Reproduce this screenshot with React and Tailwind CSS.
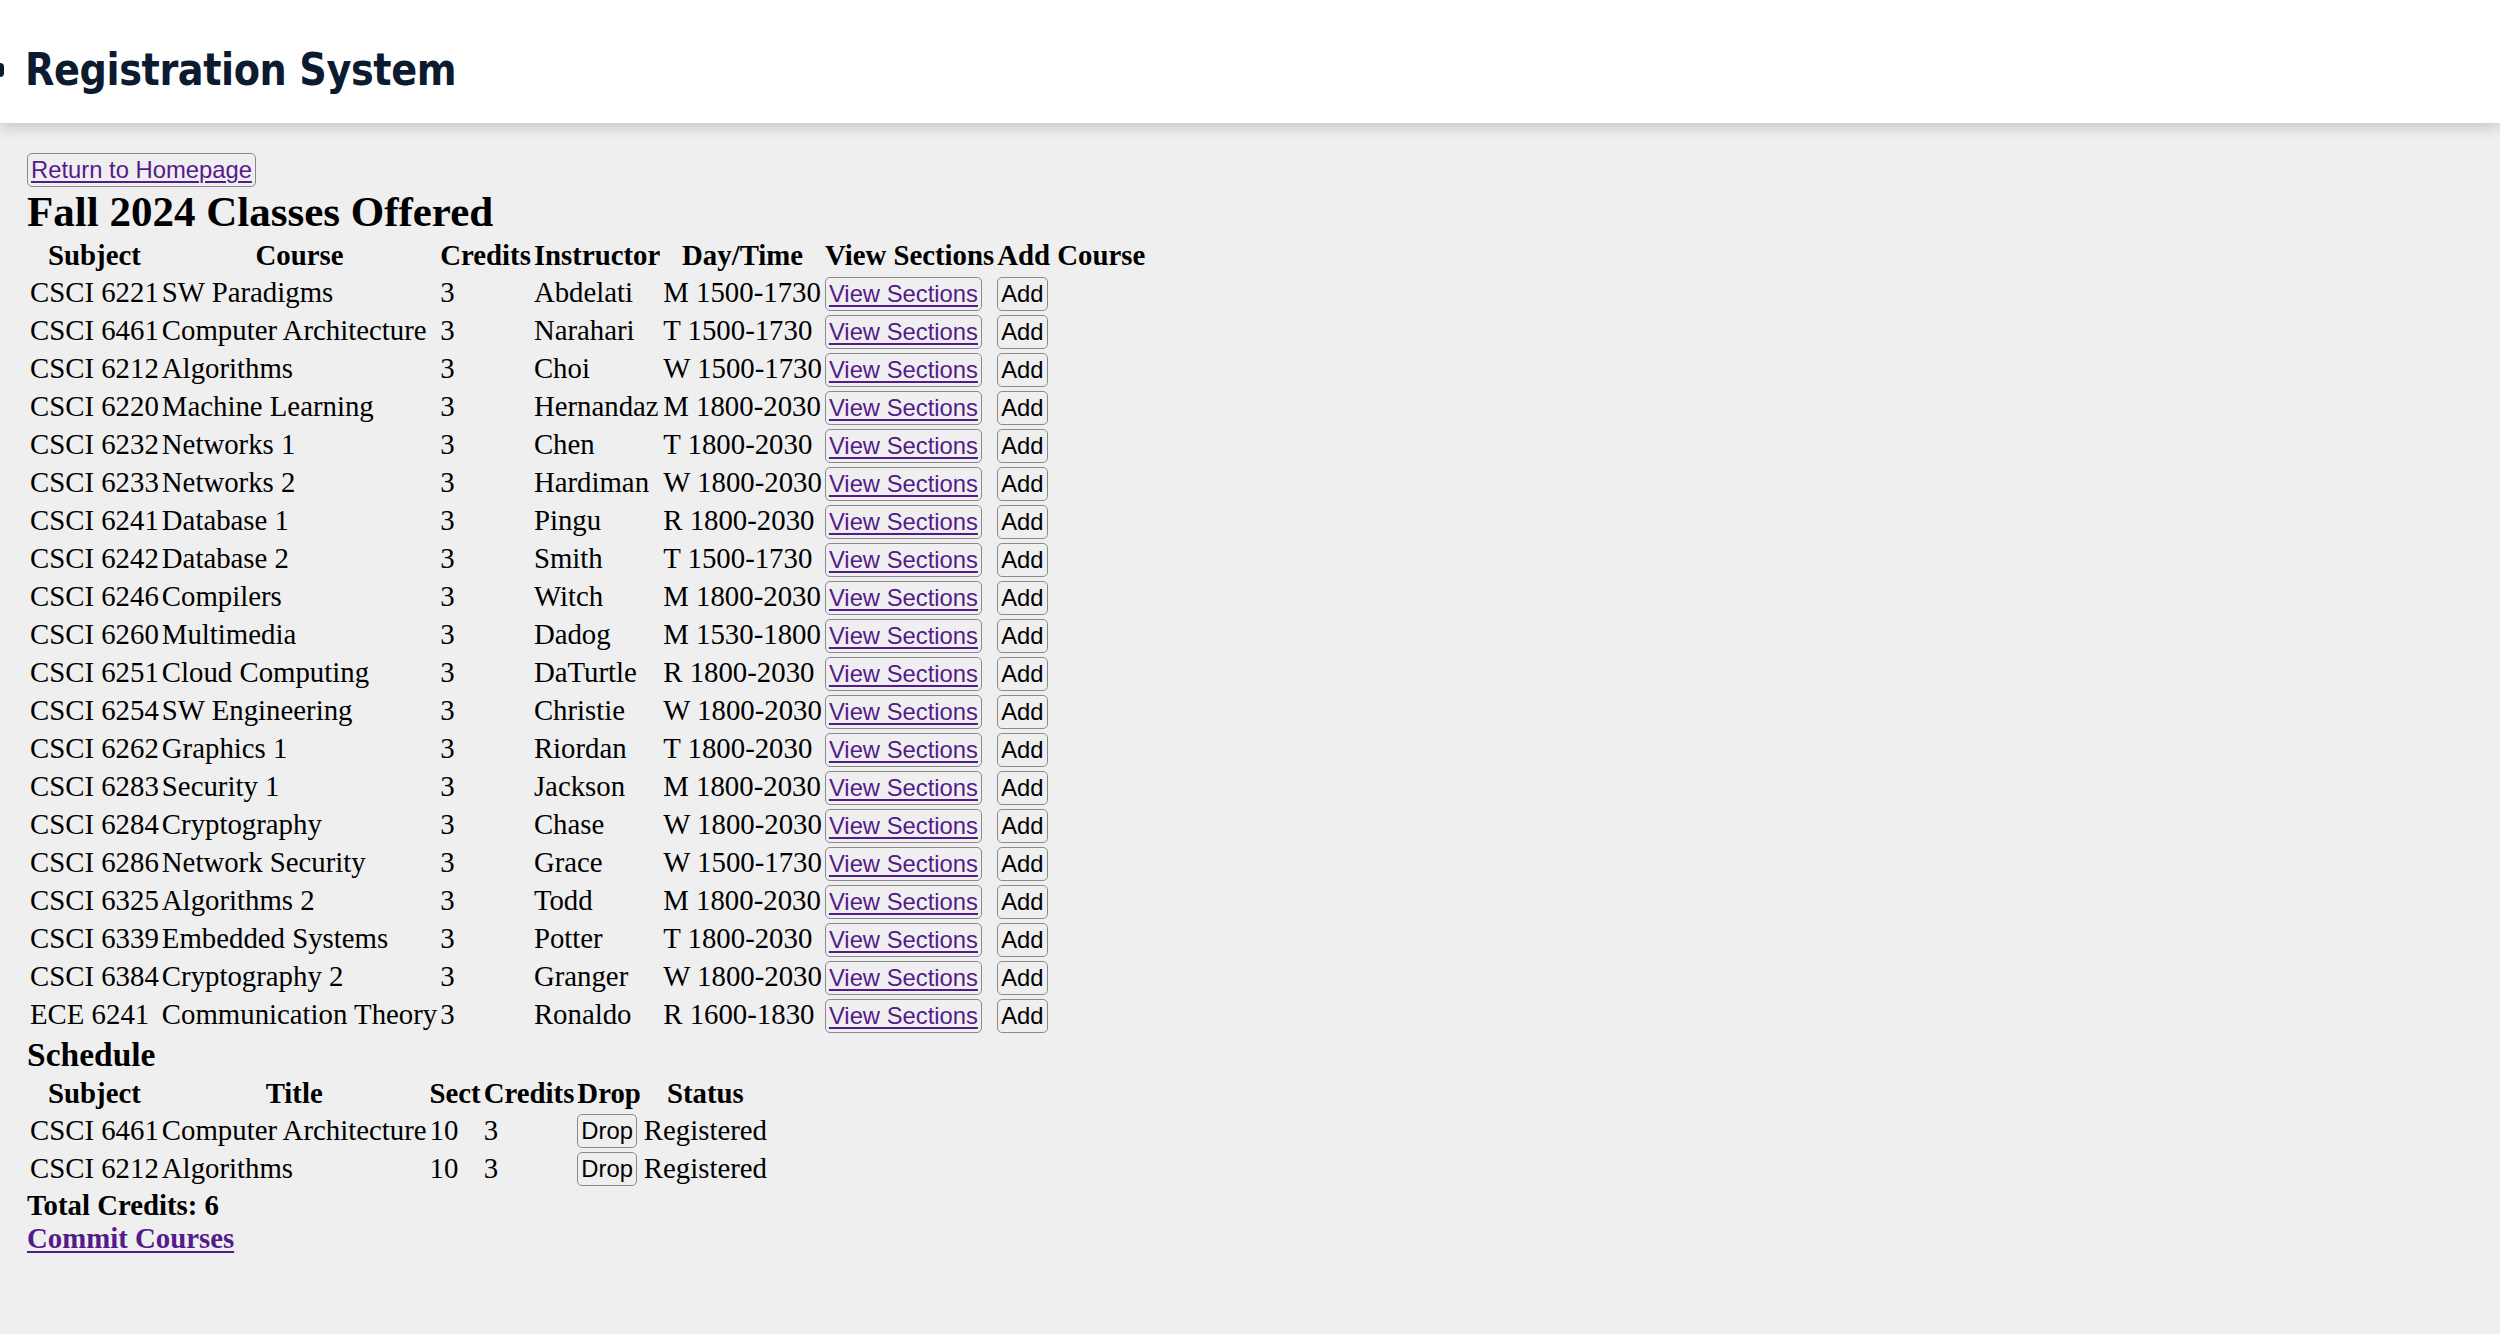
import React from 'react'

const courses = [
  ['CSCI 6221', 'SW Paradigms', '3', 'Abdelati', 'M 1500-1730'],
  ['CSCI 6461', 'Computer Architecture', '3', 'Narahari', 'T 1500-1730'],
  ['CSCI 6212', 'Algorithms', '3', 'Choi', 'W 1500-1730'],
  ['CSCI 6220', 'Machine Learning', '3', 'Hernandaz', 'M 1800-2030'],
  ['CSCI 6232', 'Networks 1', '3', 'Chen', 'T 1800-2030'],
  ['CSCI 6233', 'Networks 2', '3', 'Hardiman', 'W 1800-2030'],
  ['CSCI 6241', 'Database 1', '3', 'Pingu', 'R 1800-2030'],
  ['CSCI 6242', 'Database 2', '3', 'Smith', 'T 1500-1730'],
  ['CSCI 6246', 'Compilers', '3', 'Witch', 'M 1800-2030'],
  ['CSCI 6260', 'Multimedia', '3', 'Dadog', 'M 1530-1800'],
  ['CSCI 6251', 'Cloud Computing', '3', 'DaTurtle', 'R 1800-2030'],
  ['CSCI 6254', 'SW Engineering', '3', 'Christie', 'W 1800-2030'],
  ['CSCI 6262', 'Graphics 1', '3', 'Riordan', 'T 1800-2030'],
  ['CSCI 6283', 'Security 1', '3', 'Jackson', 'M 1800-2030'],
  ['CSCI 6284', 'Cryptography', '3', 'Chase', 'W 1800-2030'],
  ['CSCI 6286', 'Network Security', '3', 'Grace', 'W 1500-1730'],
  ['CSCI 6325', 'Algorithms 2', '3', 'Todd', 'M 1800-2030'],
  ['CSCI 6339', 'Embedded Systems', '3', 'Potter', 'T 1800-2030'],
  ['CSCI 6384', 'Cryptography 2', '3', 'Granger', 'W 1800-2030'],
  ['ECE 6241', 'Communication Theory', '3', 'Ronaldo', 'R 1600-1830'],
]

const schedule = [
  ['CSCI 6461', 'Computer Architecture', '10', '3', 'Registered'],
  ['CSCI 6212', 'Algorithms', '10', '3', 'Registered'],
]

const btn =
  "inline-block rounded-[5px] border border-[#8a8a8a] bg-[#efefef] px-[3px] py-[3px] align-baseline font-['Liberation_Sans',Arial,sans-serif] text-[23.8px] leading-[26px] text-black"

const linkText = 'text-[#551a8b] underline decoration-[2px] underline-offset-[3px]'

function LinkButton({ children }) {
  return (
    <button type="button" className={btn}>
      <span className={linkText}>{children}</span>
    </button>
  )
}

export default function App() {
  return (
    <div className="min-h-[1334px] bg-[#efefef] font-['Liberation_Serif','Times_New_Roman',serif] text-[28.8px] leading-[1.15] text-black">
      <header className="flex h-[123px] items-start bg-white shadow-[0_4px_14px_rgba(0,0,0,0.18)]">
        <div className="mt-[63px] h-[14px] w-[4px] rounded-r-full bg-[#0c1b30]" />
        <h1 className="ml-[21px] mt-[47px] origin-left scale-x-[0.85] font-['DejaVu_Sans',sans-serif] text-[45px] font-bold leading-none tracking-[-0.5px] text-[#0c1b30]">
          Registration System
        </h1>
      </header>

      <main className="pl-[27px] pt-[29px]">
        <button type="button" className={btn}>
          <span className={linkText}>Return to Homepage</span>
        </button>
        <h2 className="text-[43px] font-bold leading-[1.15]">Fall 2024 Classes Offered</h2>

        <table className="border-separate border-spacing-[3px]">
          <thead>
            <tr>
              {['Subject', 'Course', 'Credits', 'Instructor', 'Day/Time', 'View Sections', 'Add Course'].map((h) => (
                <th key={h} className="p-0 text-center font-bold">{h}</th>
              ))}
            </tr>
          </thead>
          <tbody>
            {courses.map((c) => (
              <tr key={c[0]}>
                {c.map((v, i) => (
                  <td key={i} className="p-0 text-left">{v}</td>
                ))}
                <td className="p-0 text-left"><LinkButton>View Sections</LinkButton></td>
                <td className="p-0 text-left">
                  <button type="button" className={btn}>Add</button>
                </td>
              </tr>
            ))}
          </tbody>
        </table>

        <h3 className="text-[33.5px] font-bold leading-[1.15]">Schedule</h3>
        <table className="border-separate border-spacing-[3px]">
          <thead>
            <tr>
              {['Subject', 'Title', 'Sect', 'Credits', 'Drop', 'Status'].map((h) => (
                <th key={h} className="p-0 text-center font-bold">{h}</th>
              ))}
            </tr>
          </thead>
          <tbody>
            {schedule.map((s) => (
              <tr key={s[0]}>
                <td className="p-0">{s[0]}</td>
                <td className="p-0">{s[1]}</td>
                <td className="p-0">{s[2]}</td>
                <td className="p-0">{s[3]}</td>
                <td className="p-0">
                  <button type="button" className={btn}>Drop</button>
                </td>
                <td className="p-0">{s[4]}</td>
              </tr>
            ))}
          </tbody>
        </table>

        <div className="font-bold">Total Credits: 6</div>
        <a href="#" className={`font-bold ${linkText}`}>Commit Courses</a>
      </main>
    </div>
  )
}
